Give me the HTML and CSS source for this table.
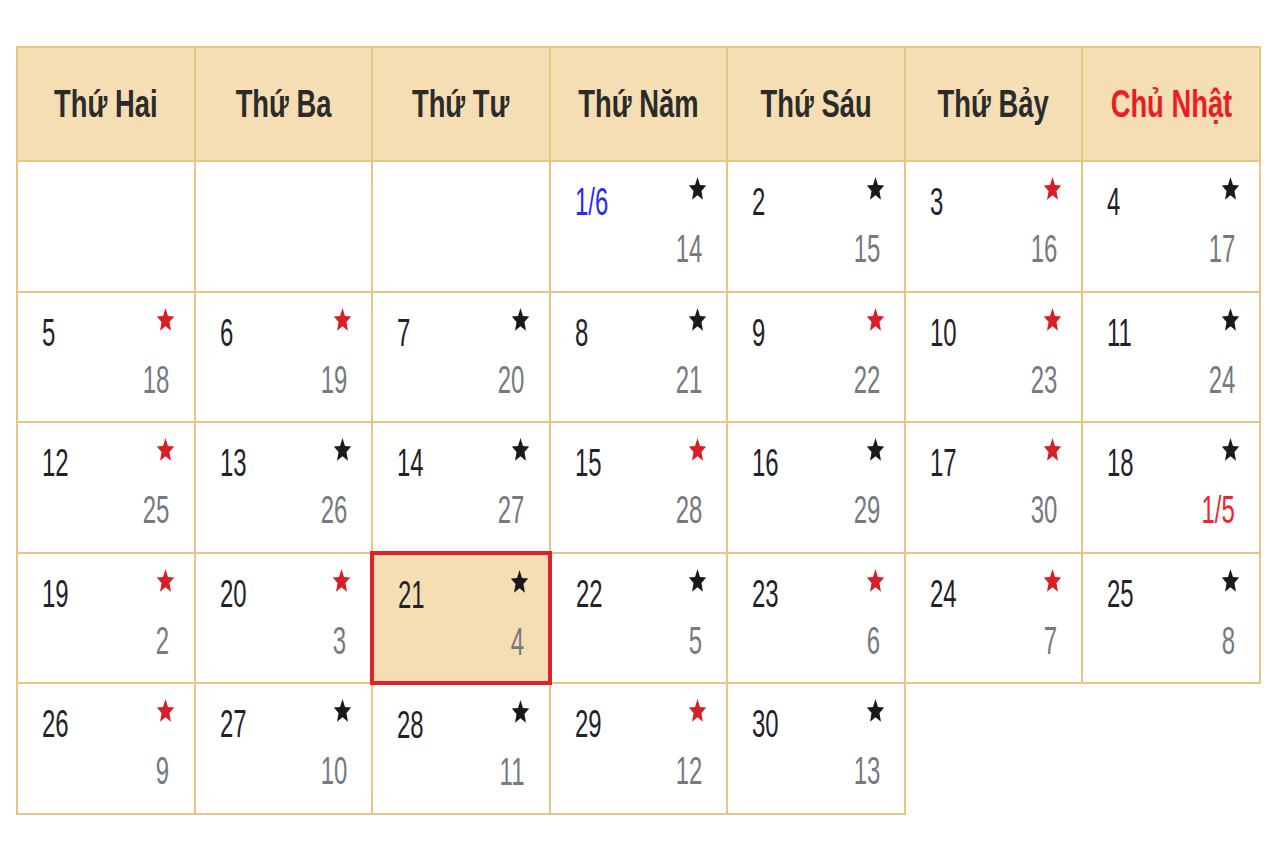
FILE: index.html
```html
<!DOCTYPE html>
<html lang="vi">
<head>
  <meta charset="UTF-8" />
  <title>Lịch tháng 6</title>
  <link rel="stylesheet" href="styles.css">
</head>
<body>

<svg width="0" height="0" style="position:absolute">
  <symbol id="star" viewBox="0 0 24 24" preserveAspectRatio="none">
    <path d="M12 1l3.1 7.3 7.9.5-6 5.1 1.9 8.1L12 17.7l-6.9 4.3 1.9-8.1-6-5.1 7.9-.5z"/>
  </symbol>
</svg>

<table class="calendar">
  <tr class="head">
    <th><span>Thứ Hai</span></th>
    <th><span>Thứ Ba</span></th>
    <th><span>Thứ Tư</span></th>
    <th><span>Thứ Năm</span></th>
    <th><span>Thứ Sáu</span></th>
    <th><span>Thứ Bảy</span></th>
    <th class="sun"><span>Chủ Nhật</span></th>
  </tr>
  <tr class="week">
    <td></td>
    <td></td>
    <td></td>
    <td><div class="top"><span class="solar first">1/6</span><svg class="star"><use href="#star"/></svg></div><div class="lunar"><span>14</span></div></td>
    <td><div class="top"><span class="solar">2</span><svg class="star"><use href="#star"/></svg></div><div class="lunar"><span>15</span></div></td>
    <td><div class="top"><span class="solar">3</span><svg class="star red"><use href="#star"/></svg></div><div class="lunar"><span>16</span></div></td>
    <td><div class="top"><span class="solar">4</span><svg class="star"><use href="#star"/></svg></div><div class="lunar"><span>17</span></div></td>
  </tr>
  <tr class="week">
    <td><div class="top"><span class="solar">5</span><svg class="star red"><use href="#star"/></svg></div><div class="lunar"><span>18</span></div></td>
    <td><div class="top"><span class="solar">6</span><svg class="star red"><use href="#star"/></svg></div><div class="lunar"><span>19</span></div></td>
    <td><div class="top"><span class="solar">7</span><svg class="star"><use href="#star"/></svg></div><div class="lunar"><span>20</span></div></td>
    <td><div class="top"><span class="solar">8</span><svg class="star"><use href="#star"/></svg></div><div class="lunar"><span>21</span></div></td>
    <td><div class="top"><span class="solar">9</span><svg class="star red"><use href="#star"/></svg></div><div class="lunar"><span>22</span></div></td>
    <td><div class="top"><span class="solar">10</span><svg class="star red"><use href="#star"/></svg></div><div class="lunar"><span>23</span></div></td>
    <td><div class="top"><span class="solar">11</span><svg class="star"><use href="#star"/></svg></div><div class="lunar"><span>24</span></div></td>
  </tr>
  <tr class="week">
    <td><div class="top"><span class="solar">12</span><svg class="star red"><use href="#star"/></svg></div><div class="lunar"><span>25</span></div></td>
    <td><div class="top"><span class="solar">13</span><svg class="star"><use href="#star"/></svg></div><div class="lunar"><span>26</span></div></td>
    <td><div class="top"><span class="solar">14</span><svg class="star"><use href="#star"/></svg></div><div class="lunar"><span>27</span></div></td>
    <td><div class="top"><span class="solar">15</span><svg class="star red"><use href="#star"/></svg></div><div class="lunar"><span>28</span></div></td>
    <td><div class="top"><span class="solar">16</span><svg class="star"><use href="#star"/></svg></div><div class="lunar"><span>29</span></div></td>
    <td><div class="top"><span class="solar">17</span><svg class="star red"><use href="#star"/></svg></div><div class="lunar"><span>30</span></div></td>
    <td><div class="top"><span class="solar">18</span><svg class="star"><use href="#star"/></svg></div><div class="lunar"><span class="new-month">1/5</span></div></td>
  </tr>
  <tr class="week">
    <td><div class="top"><span class="solar">19</span><svg class="star red"><use href="#star"/></svg></div><div class="lunar"><span>2</span></div></td>
    <td><div class="top"><span class="solar">20</span><svg class="star red"><use href="#star"/></svg></div><div class="lunar"><span>3</span></div></td>
    <td class="today"><div class="top"><span class="solar">21</span><svg class="star"><use href="#star"/></svg></div><div class="lunar"><span>4</span></div></td>
    <td><div class="top"><span class="solar">22</span><svg class="star"><use href="#star"/></svg></div><div class="lunar"><span>5</span></div></td>
    <td><div class="top"><span class="solar">23</span><svg class="star red"><use href="#star"/></svg></div><div class="lunar"><span>6</span></div></td>
    <td><div class="top"><span class="solar">24</span><svg class="star red"><use href="#star"/></svg></div><div class="lunar"><span>7</span></div></td>
    <td><div class="top"><span class="solar">25</span><svg class="star"><use href="#star"/></svg></div><div class="lunar"><span>8</span></div></td>
  </tr>
  <tr class="week">
    <td><div class="top"><span class="solar">26</span><svg class="star red"><use href="#star"/></svg></div><div class="lunar"><span>9</span></div></td>
    <td><div class="top"><span class="solar">27</span><svg class="star"><use href="#star"/></svg></div><div class="lunar"><span>10</span></div></td>
    <td><div class="top"><span class="solar">28</span><svg class="star"><use href="#star"/></svg></div><div class="lunar"><span>11</span></div></td>
    <td><div class="top"><span class="solar">29</span><svg class="star red"><use href="#star"/></svg></div><div class="lunar"><span>12</span></div></td>
    <td><div class="top"><span class="solar">30</span><svg class="star"><use href="#star"/></svg></div><div class="lunar"><span>13</span></div></td>
  </tr>
</table>

</body>
</html>
```

FILE: styles.css
```css
body {
  margin: 0;
  background: #fff;
  font-family: "Liberation Sans", Arial, sans-serif;
}
.calendar {
  margin: 46px 0 0 16px;
  width: 1245px;
  border-collapse: collapse;
  table-layout: fixed;
}
.calendar th,
.calendar td {
  border: 2px solid #e8c586;
}
.head {
  height: 114px;
}
.head th {
  background: #f5deb3;
  color: #2b2b2b;
  font-size: 38px;
  font-weight: bold;
  text-align: center;
  vertical-align: middle;
  padding: 0;
}
.head th span {
  display: inline-block;
  white-space: nowrap;
  transform: scaleX(.72);
}
.head th.sun {
  color: #ec1c24;
}
.week {
  height: 130.6px;
}
.week td {
  vertical-align: top;
  padding: 22px 24px 0 24px;
}
.week td.today {
  border: 4px solid #e0232b;
  background: #f5deb3;
}
.top {
  display: flex;
  justify-content: space-between;
  align-items: flex-start;
}
.solar {
  display: inline-block;
  font-size: 38px;
  line-height: 36px;
  color: #1f2329;
  transform: scaleX(.63);
  transform-origin: left;
}
.solar.first {
  color: #2b2bf0;
}
.star {
  width: 19px;
  height: 26px;
  margin: -8px -5px 0 0;
  fill: #1a1a1a;
  flex-shrink: 0;
}
.star.red {
  fill: #d61f27;
}
.lunar {
  margin-top: 11px;
  text-align: right;
  font-size: 38px;
  line-height: 36px;
  color: #757a80;
}
.lunar span {
  display: inline-block;
  transform: scaleX(.63);
  transform-origin: right;
}
.lunar .new-month {
  color: #f0242c;
}
```
